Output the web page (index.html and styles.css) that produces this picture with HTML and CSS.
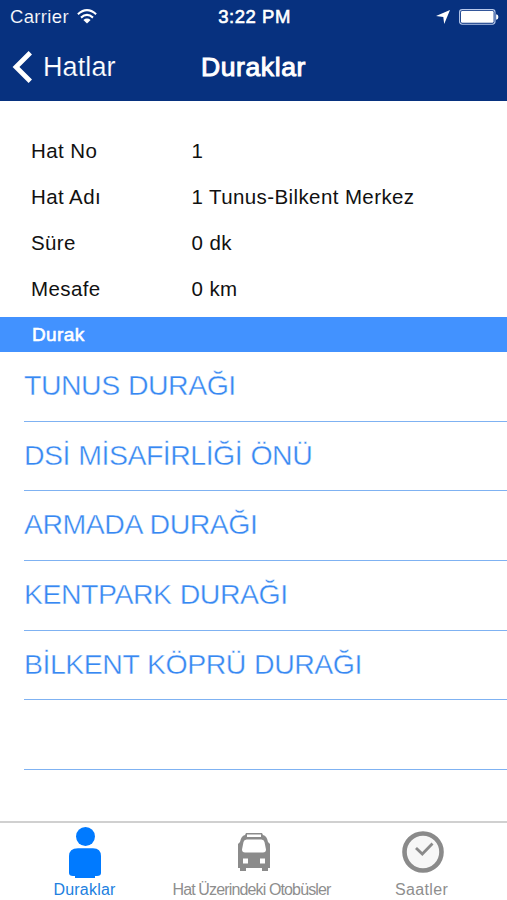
FILE: index.html
```html
<!DOCTYPE html>
<html lang="tr">
<head>
<meta charset="utf-8">
<meta name="viewport" content="width=device-width">
<title>Duraklar</title>
<link rel="stylesheet" href="styles.css">
</head>
<body>
<div class="screen">
  <header class="header">
    <div class="status">
      <div class="status-left">
        <span class="carrier">Carrier</span>
        <svg class="wifi" width="20" height="15" viewBox="0 0 20 15" fill="none" stroke="#fff" stroke-width="2.1">
          <path d="M.9 5.2Q10-2.9 19.1 5.2"/><path d="M4 8.6Q10 3.3 16 8.6"/><path d="M6.4 10.9Q10 8 13.6 10.9L10 14.5Z" fill="#fff" stroke="none"/>
        </svg>
      </div>
      <span class="time">3:22 PM</span>
      <div class="status-right">
        <svg width="14" height="14" viewBox="0 0 14 14"><path d="M14 0 8.2 14 7.3 7 0 6.1Z" fill="#fff"/></svg>
        <svg width="40" height="16" viewBox="0 0 40 16"><rect x=".6" y=".6" width="35.4" height="14.6" rx="2.6" fill="none" stroke="#b7c8eb" stroke-width="1.1"/><rect x="2" y="2" width="32.6" height="11.8" rx="1.2" fill="#fff"/><path d="M37.1 5.2Q39.4 5.4 39.4 8T37.1 10.8Z" fill="#fff"/></svg>
      </div>
    </div>
    <nav class="nav">
      <div class="back">
        <svg width="20" height="32" viewBox="0 0 20 32"><path d="M18.3 1.8 4 16 18.3 30.2" fill="none" stroke="#fff" stroke-width="4.8"/></svg>
        <span class="back-label">Hatlar</span>
      </div>
      <h1 class="title">Duraklar</h1>
      <span></span>
    </nav>
  </header>
  <dl class="info">
    <dt>Hat No</dt><dd>1</dd>
    <dt>Hat Adı</dt><dd>1 Tunus-Bilkent Merkez</dd>
    <dt>Süre</dt><dd>0 dk</dd>
    <dt>Mesafe</dt><dd>0 km</dd>
  </dl>
  <h2 class="section">Durak</h2>
  <ul class="stops">
    <li>TUNUS DURAĞI</li>
    <li>DSİ MİSAFİRLİĞİ ÖNÜ</li>
    <li>ARMADA DURAĞI</li>
    <li>KENTPARK DURAĞI</li>
    <li>BİLKENT KÖPRÜ DURAĞI</li>
    <li></li>
  </ul>
  <footer class="tabs">
    <div class="tab active">
      <svg width="34" height="52" viewBox="0 0 34 52" fill="#007aff"><circle cx="17.5" cy="9.5" r="9.5"/><path d="M1 29Q1 21.5 10 21.2H25Q33 21.5 33 29V46Q33 49 29 49H27V51H7V49H5Q1 49 1 46Z"/></svg>
      <span>Duraklar</span>
    </div>
    <div class="tab buses">
      <svg width="34" height="39" viewBox="0 0 34 39"><path fill="#8b8b8b" fill-rule="evenodd" d="M9 0H25L26 2Q30 3 31 9L33 11V35H31V38H25V35H9V38H3V35H1V11L3 9Q4 3 8 2ZM10 1.5V4H24V1.5ZM9.5 6.5Q7 6.5 6.5 9L5 16.5Q5 19.5 8 19.5H26Q29 19.5 29 16.5L27.5 9Q27 6.5 24.5 6.5ZM6 25.5V30.5H11V25.5ZM23 25.5V30.5H28V25.5Z"/></svg>
      <span>Hat Üzerindeki Otobüsler</span>
    </div>
    <div class="tab hours">
      <svg width="42" height="42" viewBox="0 0 42 42"><circle cx="21" cy="21" r="18.5" fill="#f7f7f7" stroke="#8a8a8a" stroke-width="4.6"/><path d="M14 17 20.3 23 30.5 12.5" fill="none" stroke="#8a8a8a" stroke-width="2.8"/></svg>
      <span>Saatler</span>
    </div>
  </footer>
</div>
</body>
</html>
```

FILE: styles.css
```css
* { box-sizing: border-box; margin: 0; padding: 0; }
body { background: #fff; font-family: "Liberation Sans", Arial, sans-serif; color: #111; }
svg { display: block; flex: none; }
.screen { width: 507px; height: 900px; display: flex; flex-direction: column; overflow: hidden; }
.header { height: 101px; flex: none; background: #07317f; color: #fff; }
.status { height: 33px; display: grid; grid-template-columns: 1fr auto 1fr; align-items: center; padding: 0 8px 0 10px; font-size: 18.5px; }
.status-left { display: flex; align-items: center; gap: 8px; }
.carrier { letter-spacing: .35px; -webkit-text-stroke: .15px #07317f; }
.wifi { margin-top: -1px; }
.time { font-size: 18.5px; letter-spacing: .55px; -webkit-text-stroke: .6px #fff; }
.status-right { display: flex; align-items: center; justify-content: flex-end; gap: 9px; }
.nav { height: 68px; display: grid; grid-template-columns: 1fr auto 1fr; align-items: center; padding: 0 12px; }
.back { display: flex; align-items: center; gap: 11px; }
.back-label { font-size: 27px; letter-spacing: .1px; -webkit-text-stroke: .2px #07317f; }
.title { font-size: 26.5px; font-weight: normal; letter-spacing: .6px; -webkit-text-stroke: 1px #fff; }
.info { flex: none; height: 216px; padding: 27px 31px 0; display: grid; grid-template-columns: 160.5px 1fr; grid-auto-rows: 46px; align-content: start; font-size: 20.5px; line-height: 46px; letter-spacing: .4px; }
.section { flex: none; height: 35px; padding-left: 32px; background: #4292ff; color: #fff; font-size: 19px; font-weight: normal; line-height: 36px; letter-spacing: .4px; -webkit-text-stroke: .6px #fff; }
.stops { flex: none; list-style: none; padding-left: 24px; }
.stops li { height: 69.7px; border-bottom: 1px solid #7fb2f2; color: #3788f2; font-size: 28.5px; line-height: 67px; letter-spacing: -.5px; word-spacing: .8px; white-space: nowrap; -webkit-text-stroke: .4px #fff; }
.tabs { margin-top: auto; flex: none; height: 79px; border-top: 2px solid #d0d0d0; display: grid; grid-template-columns: repeat(3, 1fr); color: #8e8e8e; font-size: 16px; }
.tab { display: flex; flex-direction: column; align-items: center; justify-content: space-between; padding: 4px 0 1px; white-space: nowrap; }
.active { color: #2180e0; }
.active span { letter-spacing: .2px; }
.buses { padding-top: 10px; }
.hours { padding-top: 8px; }
.buses span { letter-spacing: -.86px; margin-left: -4px; }
.hours span { letter-spacing: .35px; margin-left: -2px; }
```
